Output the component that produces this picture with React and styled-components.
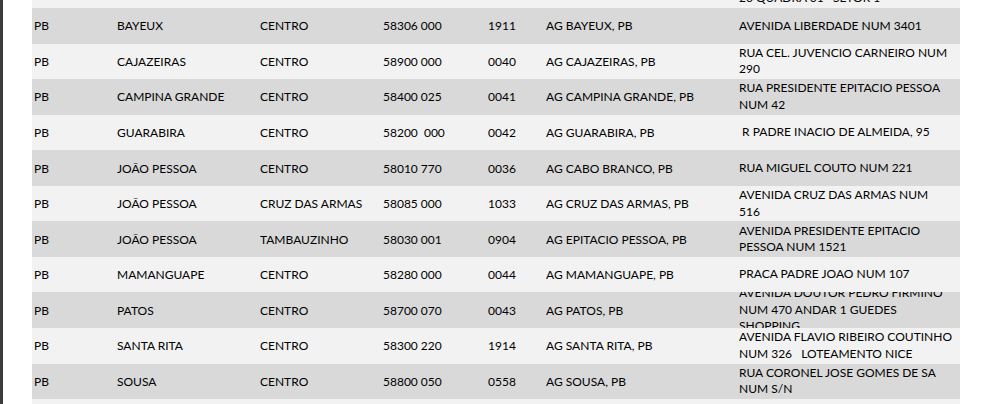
import React from "react";
import styled, { createGlobalStyle } from "styled-components";

const GlobalStyle = createGlobalStyle`
  html, body {
    margin: 0;
    padding: 0;
    background: #ffffff;
    overflow: hidden;
  }
  #root {
    height: 404px;
  }
`;

const Viewer = styled.div`
  display: flex;
  width: 990px;
  height: 404px;
  overflow: hidden;
  background: #ffffff;
`;

const Gutter = styled.div`
  flex: 0 0 3px;
  background: #3d3d3d;
`;

const Page = styled.div`
  flex: 1;
  height: 404px;
  overflow: hidden;
  padding-left: 29px;
  background: #ffffff;
`;

const Table = styled.div`
  width: 928px;
  margin-top: -27.5px;
  display: flex;
  flex-direction: column;
  font-family: "Lato", "DejaVu Sans", sans-serif;
  font-size: 12px;
  color: #000000;
`;

const Row = styled.div`
  display: grid;
  grid-template-columns: 85px 143px 123px 105px 58px 193px 221px;
  height: 35.55px;
  background: ${(p) => (p.$shade ? "#d9d9d9" : "#f2f2f2")};
`;

const Cell = styled.div`
  display: flex;
  align-items: center;
  padding-left: ${(p) => p.$pad || 0}px;
  white-space: pre;
  overflow: hidden;
`;

const AddressCell = styled.div`
  display: flex;
  flex-direction: column;
  justify-content: center;
  overflow: hidden;
  line-height: 16.5px;
`;

const Line = styled.span`
  white-space: pre;
`;

const rows = [
  ["", "", "", "", "", "", ["", "20 QUADRA 01   SETOR 1"]],
  ["PB", "BAYEUX", "CENTRO", "58306 000", "1911", "AG BAYEUX, PB", ["AVENIDA LIBERDADE NUM 3401"]],
  ["PB", "CAJAZEIRAS", "CENTRO", "58900 000", "0040", "AG CAJAZEIRAS, PB", ["RUA CEL. JUVENCIO CARNEIRO NUM", "290"]],
  ["PB", "CAMPINA GRANDE", "CENTRO", "58400 025", "0041", "AG CAMPINA GRANDE, PB", ["RUA PRESIDENTE EPITACIO PESSOA", "NUM 42"]],
  ["PB", "GUARABIRA", "CENTRO", "58200  000", "0042", "AG GUARABIRA, PB", ["\u00a0R PADRE INACIO DE ALMEIDA, 95"]],
  ["PB", "JOÃO PESSOA", "CENTRO", "58010 770", "0036", "AG CABO BRANCO, PB", ["RUA MIGUEL COUTO NUM 221"]],
  ["PB", "JOÃO PESSOA", "CRUZ DAS ARMAS", "58085 000", "1033", "AG CRUZ DAS ARMAS, PB", ["AVENIDA CRUZ DAS ARMAS NUM", "516"]],
  ["PB", "JOÃO PESSOA", "TAMBAUZINHO", "58030 001", "0904", "AG EPITACIO PESSOA, PB", ["AVENIDA PRESIDENTE EPITACIO", "PESSOA NUM 1521"]],
  ["PB", "MAMANGUAPE", "CENTRO", "58280 000", "0044", "AG MAMANGUAPE, PB", ["PRACA PADRE JOAO NUM 107"]],
  ["PB", "PATOS", "CENTRO", "58700 070", "0043", "AG PATOS, PB", ["AVENIDA DOUTOR PEDRO FIRMINO", "NUM 470 ANDAR 1 GUEDES", "SHOPPING"]],
  ["PB", "SANTA RITA", "CENTRO", "58300 220", "1914", "AG SANTA RITA, PB", ["AVENIDA FLAVIO RIBEIRO COUTINHO", "NUM 326   LOTEAMENTO NICE"]],
  ["PB", "SOUSA", "CENTRO", "58800 050", "0558", "AG SOUSA, PB", ["RUA CORONEL JOSE GOMES DE SA", "NUM S/N"]],
  ["", "", "", "", "", "", [""]],
];

export default function App() {
  return (
    <>
      <GlobalStyle />
      <Viewer>
        <Gutter />
        <Page>
          <Table>
            {rows.map((r, i) => (
              <Row key={i} $shade={i % 2 === 1}>
                <Cell $pad={2}>{r[0]}</Cell>
                <Cell>{r[1]}</Cell>
                <Cell>{r[2]}</Cell>
                <Cell>{r[3]}</Cell>
                <Cell>{r[4]}</Cell>
                <Cell>{r[5]}</Cell>
                <AddressCell>
                  {r[6].map((l, j) => (
                    <Line key={j}>{l || "\u00a0"}</Line>
                  ))}
                </AddressCell>
              </Row>
            ))}
          </Table>
        </Page>
      </Viewer>
    </>
  );
}
